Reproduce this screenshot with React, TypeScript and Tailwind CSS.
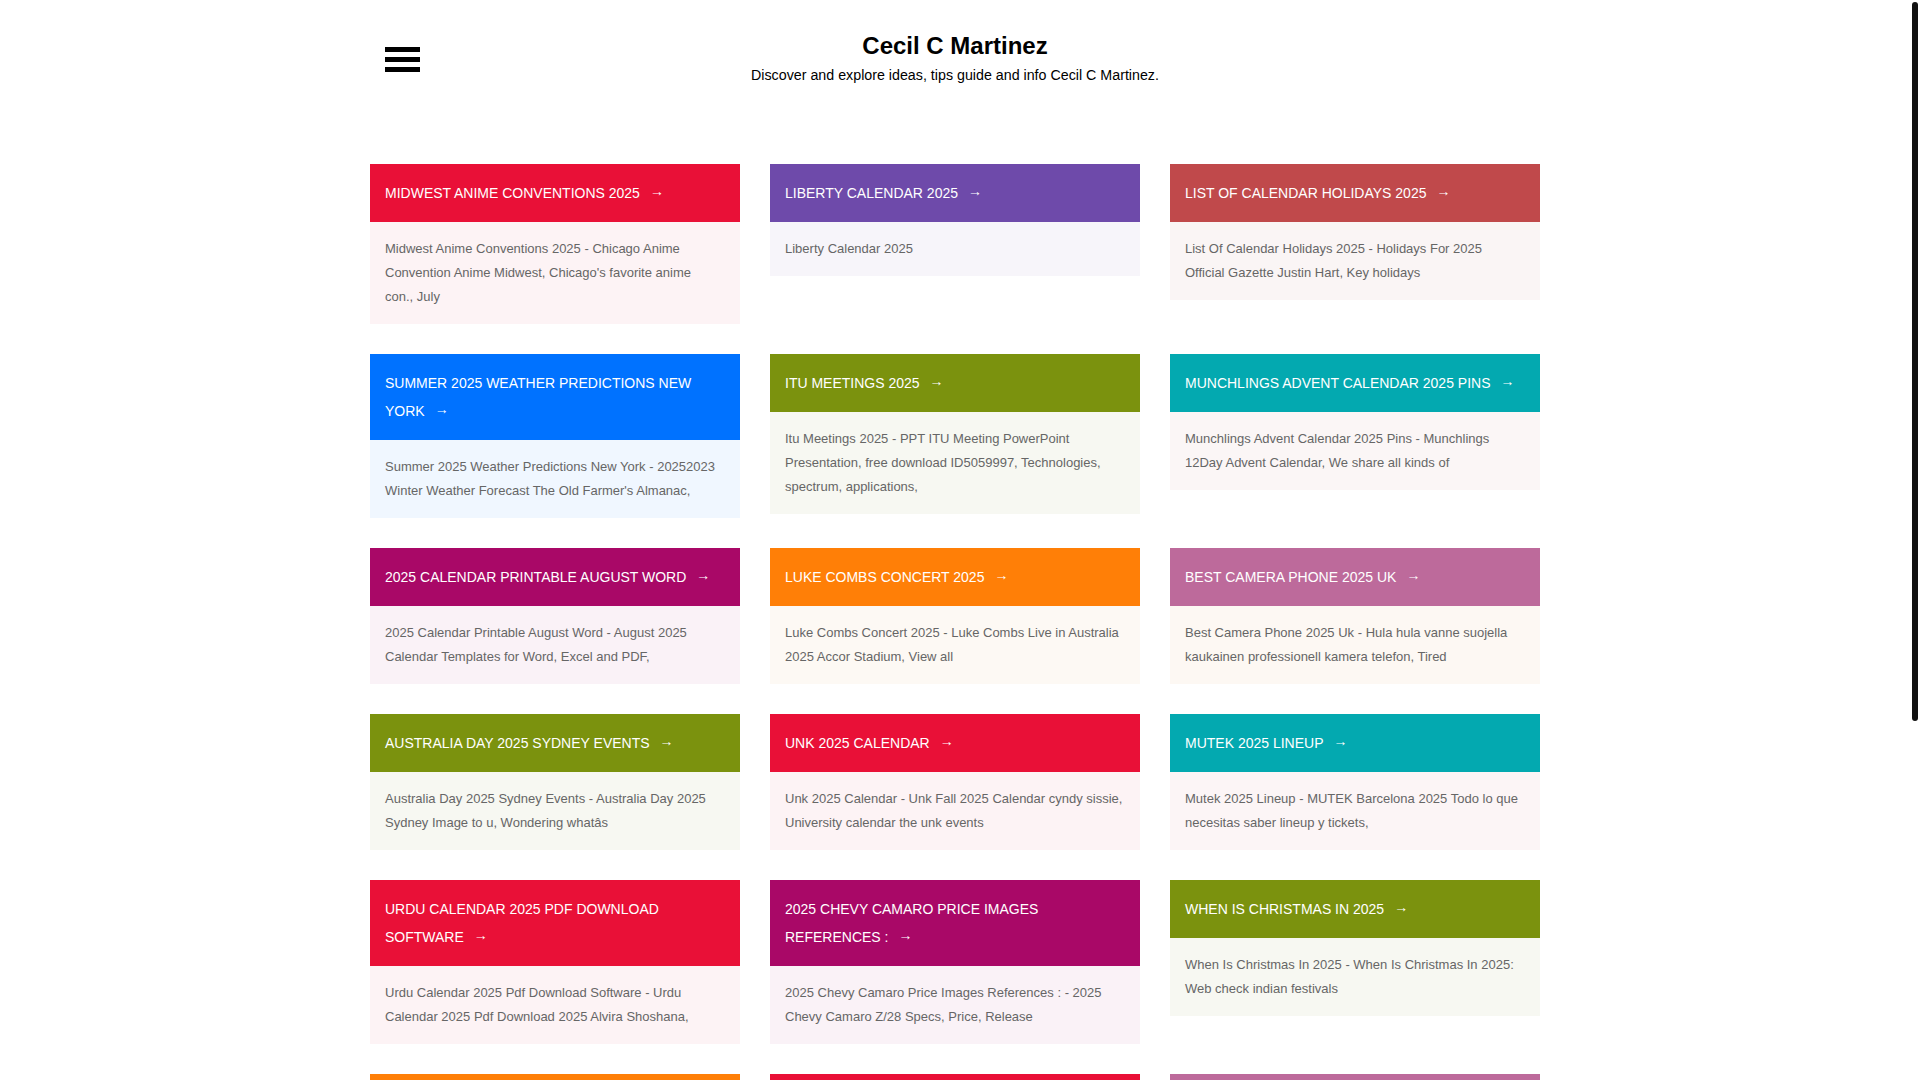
// Blog index: a masthead and a three-column grid of colour-headed post cards
type Post = {
  title: string;
  excerpt: string;
  head: string;
  body: string;
};

const POSTS: Post[] = [
  {
    title: "Midwest Anime Conventions 2025",
    excerpt:
      "Midwest Anime Conventions 2025 - Chicago Anime Convention Anime Midwest, Chicago's favorite anime con., July",
    head: "bg-[#e91037]",
    body: "bg-[#fdf3f5]",
  },
  {
    title: "Liberty Calendar 2025",
    excerpt: "Liberty Calendar 2025",
    head: "bg-[#6e4aaa]",
    body: "bg-[#f7f5fa]",
  },
  {
    title: "List Of Calendar Holidays 2025",
    excerpt:
      "List Of Calendar Holidays 2025 - Holidays For 2025 Official Gazette Justin Hart, Key holidays",
    head: "bg-[#c0494b]",
    body: "bg-[#faf5f5]",
  },
  {
    title: "Summer 2025 Weather Predictions New York",
    excerpt:
      "Summer 2025 Weather Predictions New York - 20252023 Winter Weather Forecast The Old Farmer's Almanac,",
    head: "bg-[#0072ff]",
    body: "bg-[#f0f7ff]",
  },
  {
    title: "Itu Meetings 2025",
    excerpt:
      "Itu Meetings 2025 - PPT ITU Meeting PowerPoint Presentation, free download ID5059997, Technologies, spectrum, applications,",
    head: "bg-[#7b920e]",
    body: "bg-[#f7f8f2]",
  },
  {
    title: "Munchlings Advent Calendar 2025 Pins",
    excerpt:
      "Munchlings Advent Calendar 2025 Pins - Munchlings 12Day Advent Calendar, We share all kinds of",
    head: "bg-[#03a9b0]",
    body: "bg-[#fbf6f6]",
  },
  {
    title: "2025 Calendar Printable August Word",
    excerpt:
      "2025 Calendar Printable August Word - August 2025 Calendar Templates for Word, Excel and PDF,",
    head: "bg-[#a90867]",
    body: "bg-[#faf2f7]",
  },
  {
    title: "Luke Combs Concert 2025",
    excerpt:
      "Luke Combs Concert 2025 - Luke Combs Live in Australia 2025 Accor Stadium, View all",
    head: "bg-[#ff7f07]",
    body: "bg-[#fdf9f4]",
  },
  {
    title: "Best Camera Phone 2025 Uk",
    excerpt:
      "Best Camera Phone 2025 Uk - Hula hula vanne suojella kaukainen professionell kamera telefon, Tired",
    head: "bg-[#bd6a9b]",
    body: "bg-[#fdf8f3]",
  },
  {
    title: "Australia Day 2025 Sydney Events",
    excerpt:
      "Australia Day 2025 Sydney Events - Australia Day 2025 Sydney Image to u, Wondering whatâs",
    head: "bg-[#7b920e]",
    body: "bg-[#f7f8f2]",
  },
  {
    title: "Unk 2025 Calendar",
    excerpt:
      "Unk 2025 Calendar - Unk Fall 2025 Calendar cyndy sissie, University calendar the unk events",
    head: "bg-[#e91037]",
    body: "bg-[#fdf3f5]",
  },
  {
    title: "Mutek 2025 Lineup",
    excerpt:
      "Mutek 2025 Lineup - MUTEK Barcelona 2025 Todo lo que necesitas saber lineup y tickets,",
    head: "bg-[#03a9b0]",
    body: "bg-[#fcf5f6]",
  },
  {
    title: "Urdu Calendar 2025 Pdf Download Software",
    excerpt:
      "Urdu Calendar 2025 Pdf Download Software - Urdu Calendar 2025 Pdf Download 2025 Alvira Shoshana,",
    head: "bg-[#e91037]",
    body: "bg-[#fdf3f5]",
  },
  {
    title: "2025 Chevy Camaro Price Images References :",
    excerpt:
      "2025 Chevy Camaro Price Images References : - 2025 Chevy Camaro Z/28 Specs, Price, Release",
    head: "bg-[#a90867]",
    body: "bg-[#faf2f7]",
  },
  {
    title: "When Is Christmas In 2025",
    excerpt:
      "When Is Christmas In 2025 - When Is Christmas In 2025: Web check indian festivals",
    head: "bg-[#7b920e]",
    body: "bg-[#f7f8f2]",
  },
  {
    title: "Nfl Schedule 2025 Week 1",
    excerpt:
      "Nfl Schedule 2025 Week 1 - NFL Week 1 Schedule 2025 Printable, Full slate of games and kickoff times,",
    head: "bg-[#ff7f07]",
    body: "bg-[#fdf9f4]",
  },
  {
    title: "Chinese New Year 2025 Animal",
    excerpt:
      "Chinese New Year 2025 Animal - Year of the Snake 2025 Meaning, Lucky colors and traditions,",
    head: "bg-[#e91037]",
    body: "bg-[#fdf3f5]",
  },
  {
    title: "Easter Sunday 2025 Date",
    excerpt:
      "Easter Sunday 2025 Date - When Is Easter 2025 Calendar, Holy week dates and celebrations,",
    head: "bg-[#bd6a9b]",
    body: "bg-[#fdf8f3]",
  },
];

export default function App() {
  return (
    <div className="flex h-screen bg-white font-['Liberation_Sans',Arial,sans-serif]">
      <div className="flex-1 overflow-y-auto [scrollbar-width:none]">
        <div className="w-[1170px] mx-auto">
          {/* 报头 */}
          <header className="grid grid-cols-[1fr_auto_1fr] items-start pt-[25px] h-[164px]">
            <button className="ml-[15px] mt-[22px] w-[35px] flex flex-col gap-[5px]" aria-label="menu">
              <span className="block h-[5px] bg-black" />
              <span className="block h-[5px] bg-black" />
              <span className="block h-[5px] bg-black" />
            </button>
            <div className="text-center">
              <h1 className="text-[24px] leading-[42px] font-bold text-black">Cecil C Martinez</h1>
              <p className="text-[14.25px] leading-[16px] text-black">
                Discover and explore ideas, tips guide and info Cecil C Martinez.
              </p>
            </div>
            <div />
          </header>

          {/* 文章卡片 */}
          <main className="grid grid-cols-3 gap-x-[30px] gap-y-[30px] items-start">
            {POSTS.map((p) => (
              <PostCard key={p.title} post={p} />
            ))}
          </main>

          <footer className="h-[170px] flex items-center justify-center text-[13px] text-[#666]">
            © 2025 Cecil C Martinez
          </footer>
        </div>
      </div>

      {/* 滚动条 */}
      <div className="w-[10px] shrink-0 p-[2px]">
        <div className="h-[719px] rounded-[3px] bg-[#111]" />
      </div>
    </div>
  );
}

function PostCard({ post }: { post: Post }) {
  return (
    <article>
      <a href="#" className={`block px-[15px] py-[15px] ${post.head}`}>
        <h2 className="text-[14px] leading-[28px] uppercase text-white">
          {post.title}
          <span className="relative top-[-2px] ml-[10px]">→</span>
        </h2>
      </a>
      <div className={`pl-[15px] pr-[17.5px] py-[15px] ${post.body}`}>
        <p className="text-[13px] leading-[24px] text-[#666]">{post.excerpt}</p>
      </div>
    </article>
  );
}
